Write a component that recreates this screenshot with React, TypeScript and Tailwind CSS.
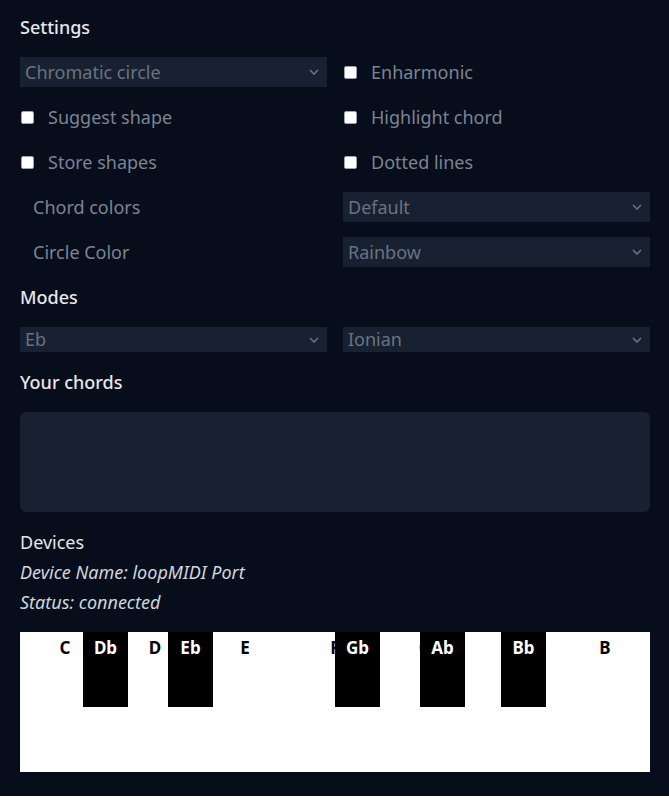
import React from "react";

const font = { fontFamily: '"Noto Sans", "DejaVu Sans", sans-serif' };

const Chevron = () => (
  <svg width="10" height="6" viewBox="0 0 10 6" className="shrink-0">
    <path d="M1 1l4 4 4-4" fill="none" stroke="#6b7280" strokeWidth="1.6" />
  </svg>
);

const Select = ({ value, tall = true }: { value: string; tall?: boolean }) => (
  <div
    className={`flex items-center justify-between bg-[#172131] pl-[5px] pr-[8px] text-[18px] text-[#6b7280] ${
      tall ? "h-[30px]" : "h-[25px]"
    }`}
  >
    <span>{value}</span>
    <Chevron />
  </div>
);

const Check = ({ label }: { label: string }) => (
  <label className="flex h-[30px] items-center text-[18px] text-[#7b8494]">
    <span className="ml-px mr-[14px] h-[13px] w-[13px] rounded-[2px] border border-[#9ca3af] bg-white" />
    {label}
  </label>
);

const whites = ["C", "D", "E", "F", "G", "A", "B"];
const blacks = [
  { name: "Db", left: 63 },
  { name: "Eb", left: 148 },
  { name: "Gb", left: 315 },
  { name: "Ab", left: 400 },
  { name: "Bb", left: 481 },
];

export default function App() {
  return (
    <div className="h-[796px] bg-[#070d1b] pl-5 pr-[19px] pt-3" style={font}>
      <div className="grid grid-cols-2 gap-x-4 gap-y-[15px]">
        <div className="col-span-2 flex h-[30px] items-center text-[18px] font-medium text-[#e5e7eb]">
          Settings
        </div>
        <Select value="Chromatic circle" />
        <Check label="Enharmonic" />
        <Check label="Suggest shape" />
        <Check label="Highlight chord" />
        <Check label="Store shapes" />
        <Check label="Dotted lines" />
        <div className="flex h-[30px] items-center pl-[13px] text-[18px] text-[#7b8494]">
          Chord colors
        </div>
        <Select value="Default" />
        <div className="flex h-[30px] items-center pl-[13px] text-[18px] text-[#7b8494]">
          Circle Color
        </div>
        <Select value="Rainbow" />
        <div className="col-span-2 flex h-[30px] items-center text-[18px] font-medium text-[#e5e7eb]">
          Modes
        </div>
        <Select value="Eb" tall={false} />
        <Select value="Ionian" tall={false} />
        <div className="col-span-2 flex h-[30px] items-center text-[18px] font-medium text-[#e5e7eb]">
          Your chords
        </div>
        <div className="col-span-2 h-[100px] rounded-md bg-[#172131]" />
      </div>
      <div className="mt-[15px] flex flex-col">
        <div className="flex h-[30px] items-center text-[18px] text-[#e5e7eb]">Devices</div>
        <div className="flex h-[30px] items-center text-[18px] italic text-[#d1d5db]">
          Device Name: loopMIDI Port
        </div>
        <div className="flex h-[30px] items-center text-[18px] italic text-[#d1d5db]">
          Status: connected
        </div>
      </div>
      <div className="relative mt-[15px] flex h-[140px] bg-white">
        {whites.map((w) => (
          <div key={w} className="flex-1 pt-[3px] text-center text-[17px] font-bold text-black">
            {w}
          </div>
        ))}
        {blacks.map((b) => (
          <div
            key={b.name}
            className="absolute top-0 h-[75px] w-[45px] bg-black pt-[3px] text-center text-[17px] font-bold text-white"
            style={{ left: b.left }}
          >
            {b.name}
          </div>
        ))}
      </div>
    </div>
  );
}
